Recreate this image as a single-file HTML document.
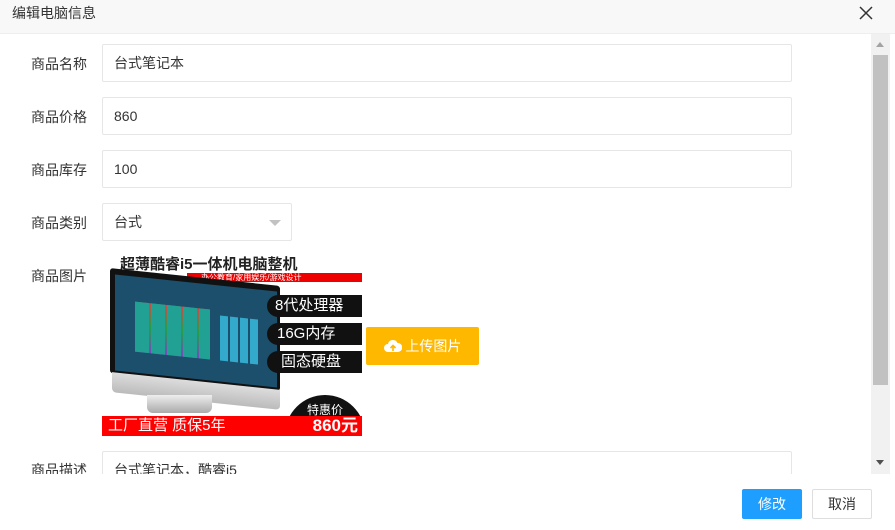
<!DOCTYPE html>
<html><head><meta charset="utf-8"><style>
*{box-sizing:border-box;margin:0;padding:0}
body{width:895px;height:530px;overflow:hidden;background:#fff;font-family:"Liberation Sans","Noto Sans CJK SC",sans-serif;font-size:14px;color:#333;position:relative}
.hd{position:absolute;left:0;top:0;width:895px;height:34px;background:#f8f8f8;border-bottom:1px solid #eee;font-size:14px;line-height:26px;padding-left:12px;color:#333}
.x{position:absolute;left:859px;top:6px}
.sb{position:absolute;left:871px;top:34px;width:19px;height:440px;background:#f1f1f1}
.th{position:absolute;left:873px;top:55px;width:15px;height:330px;background:#c1c1c1}
.lab{position:absolute;left:31px;font-size:14px;color:#333}
.in{position:absolute;left:102px;width:690px;height:38px;border:1px solid #e6e6e6;border-radius:2px;padding-left:11px;line-height:36px;font-size:14px;background:#fff}
.img{position:absolute;left:102px;top:253px;width:260px;height:183px;overflow:hidden;background:#fff}
.btn{position:absolute;height:31px;line-height:31px;text-align:center;border-radius:2px;font-size:14px}
</style></head><body>
<div class="hd">编辑电脑信息<svg class="x" width="14" height="14" viewBox="0 0 14 14"><path d="M1 1L13 13M13 1L1 13" stroke="#333" stroke-width="1.5"/></svg></div>
<div style="position:absolute;left:0;top:34px;width:871px;height:440px;overflow:hidden">
<div class="lab" style="top:20px">商品名称</div><div class="in" style="top:10px">台式笔记本</div>
<div class="lab" style="top:73px">商品价格</div><div class="in" style="top:63px">860</div>
<div class="lab" style="top:126px">商品库存</div><div class="in" style="top:116px">100</div>
<div class="lab" style="top:179px">商品类别</div><div class="in" style="top:169px;width:190px">台式<span style="position:absolute;right:10px;top:16px;border:6px solid transparent;border-top-color:#c2c2c2;border-bottom:0"></span></div>
<div class="lab" style="top:232px">商品图片</div>
<div class="lab" style="top:426px">商品描述</div><div class="in" style="top:417px">台式笔记本，酷睿i5</div>
</div>
<div class="img">
<div style="position:absolute;left:18px;top:0;font-size:15px;font-weight:bold;color:#222">超薄酷睿i5一体机电脑整机</div>
<div style="position:absolute;left:85px;top:20px;width:175px;height:9px;background:#e00;color:#fff;font-size:8px;line-height:9px;padding-left:14px">办公教育/家用娱乐/游戏设计</div>
<div style="position:absolute;left:8px;top:24px;width:170px;height:105px;background:#111;transform:skewY(6deg);border-radius:3px"></div>
<div style="position:absolute;left:13px;top:30px;width:162px;height:96px;background:#1b4f6b;transform:skewY(6deg)">
<div style="position:absolute;left:20px;top:25px;width:75px;height:50px;background:repeating-linear-gradient(90deg,#2a9 0 14px,transparent 14px 16px),linear-gradient(#e44,#2a4,#84c);opacity:.9"></div>
<div style="position:absolute;left:105px;top:30px;width:40px;height:45px;background:repeating-linear-gradient(90deg,#3ac 0 8px,transparent 8px 10px)"></div>
</div>
<div style="position:absolute;left:10px;top:128px;width:168px;height:20px;background:linear-gradient(#ddd,#bbb);transform:skewY(6deg);border-radius:0 0 4px 4px"></div>
<div style="position:absolute;left:45px;top:142px;width:65px;height:18px;background:linear-gradient(#eee,#aaa);border-radius:0 0 6px 6px"></div>
<div style="position:absolute;left:165px;top:42px;width:95px;height:22px;background:#111;border-radius:11px 0 0 11px;color:#fff;font-size:15px;line-height:22px;padding-left:8px">8代处理器</div>
<div style="position:absolute;left:165px;top:70px;width:95px;height:22px;background:#111;border-radius:11px 0 0 11px;color:#fff;font-size:15px;line-height:22px;padding-left:10px">16G内存</div>
<div style="position:absolute;left:165px;top:98px;width:95px;height:22px;background:#111;border-radius:11px 0 0 11px;color:#fff;font-size:15px;line-height:22px;padding-left:14px">固态硬盘</div>
<div style="position:absolute;left:183px;top:142px;width:80px;height:40px;background:#111;border-radius:40px 40px 0 0;color:#fff;font-size:12px;text-align:center;padding-top:6px">特惠价</div>
<div style="position:absolute;left:0;top:163px;width:260px;height:20px;background:#f00;color:#fff;font-size:15px;line-height:20px;padding-left:6px">工厂直营 质保5年<span style="position:absolute;right:4px;font-size:17px;font-weight:bold">860元</span></div>
</div>
<div class="btn" style="left:366px;top:327px;width:113px;height:38px;line-height:38px;background:#ffb800;color:#fff"><svg width="18" height="14" viewBox="0 0 18 14" style="vertical-align:-2px"><path d="M4 13a4 4 0 0 1 0-8a5 5 0 0 1 9.5-1a4.5 4.5 0 0 1 .5 9z" fill="#fff"/><path d="M9 12V7M6.5 9L9 6.5L11.5 9" stroke="#ffb800" stroke-width="1.6" fill="none"/></svg> 上传图片</div>
<div class="sb"></div><div class="th"></div>
<div style="position:absolute;left:876px;top:42px;border:4px solid transparent;border-bottom:5px solid #a3a3a3;border-top:0"></div>
<div style="position:absolute;left:876px;top:460px;border:4px solid transparent;border-top:5px solid #505050;border-bottom:0"></div>
<div class="btn" style="left:742px;top:489px;width:60px;height:30px;line-height:30px;background:#1e9fff;color:#fff">修改</div>
<div class="btn" style="left:812px;top:489px;width:60px;height:30px;line-height:28px;border:1px solid #dedede;color:#333">取消</div>
</body></html>
